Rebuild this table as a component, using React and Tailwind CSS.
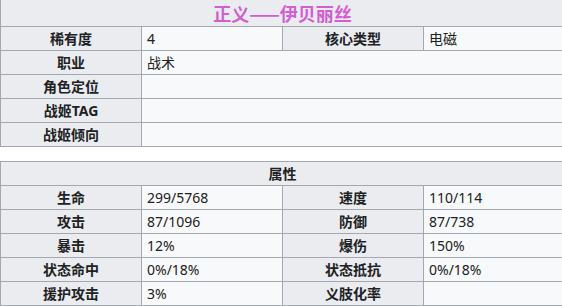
import React from 'react';

const head = 'bg-[#eaecf0] border-r border-b border-[#a2a9b1] font-bold text-center flex items-center justify-center';
const data = 'bg-[#f8f9fa] border-r border-b border-[#a2a9b1] flex items-center pl-[5px]';

const infoRows = [
  ['职业', '战术'],
  ['角色定位', ''],
  ['战姬TAG', ''],
  ['战姬倾向', ''],
];

const statRows = [
  ['生命', '299/5768', '速度', '110/114'],
  ['攻击', '87/1096', '防御', '87/738'],
  ['暴击', '12%', '爆伤', '150%'],
  ['状态命中', '0%/18%', '状态抵抗', '0%/18%'],
  ['援护攻击', '3%', '义肢化率', ''],
];

const Cell = ({ h, children, span }) => (
  <div className={`${h ? head : data} h-[24px] ${span ? 'col-span-3' : ''}`}>{children}</div>
);

export default function App() {
  return (
    <div
      className="w-[562px] h-[306px] overflow-hidden bg-white text-[14px] text-[#202122] leading-none"
      style={{ fontFamily: '"Noto Sans", "Noto Sans CJK SC", sans-serif' }}
    >
      <div className="w-[565px] grid grid-cols-[141px_141px_141px_141px] border-l border-[#a2a9b1]">
        <div
          className="col-span-4 h-[27px] bg-[#eaecf0] border-r border-b border-[#a2a9b1] flex items-center justify-center text-[18px] font-bold text-[#d35ed3]"
          style={{ fontFamily: '"Noto Sans CJK SC", sans-serif' }}
        >
          正义——伊贝丽丝
        </div>
        <Cell h>稀有度</Cell>
        <Cell>4</Cell>
        <Cell h>核心类型</Cell>
        <Cell>电磁</Cell>
        {infoRows.map(([k, v]) => (
          <React.Fragment key={k}>
            <Cell h>{k}</Cell>
            <Cell span>{v}</Cell>
          </React.Fragment>
        ))}
      </div>

      <div className="mt-[14px] w-[565px] grid grid-cols-[141px_141px_141px_141px] border-l border-t border-[#a2a9b1]">
        <div className={`${head} col-span-4 h-[24px]`}>属性</div>
        {statRows.map((r) => (
          <React.Fragment key={r[0]}>
            <Cell h>{r[0]}</Cell>
            <Cell>{r[1]}</Cell>
            <Cell h>{r[2]}</Cell>
            <Cell>{r[3]}</Cell>
          </React.Fragment>
        ))}
      </div>
    </div>
  );
}
